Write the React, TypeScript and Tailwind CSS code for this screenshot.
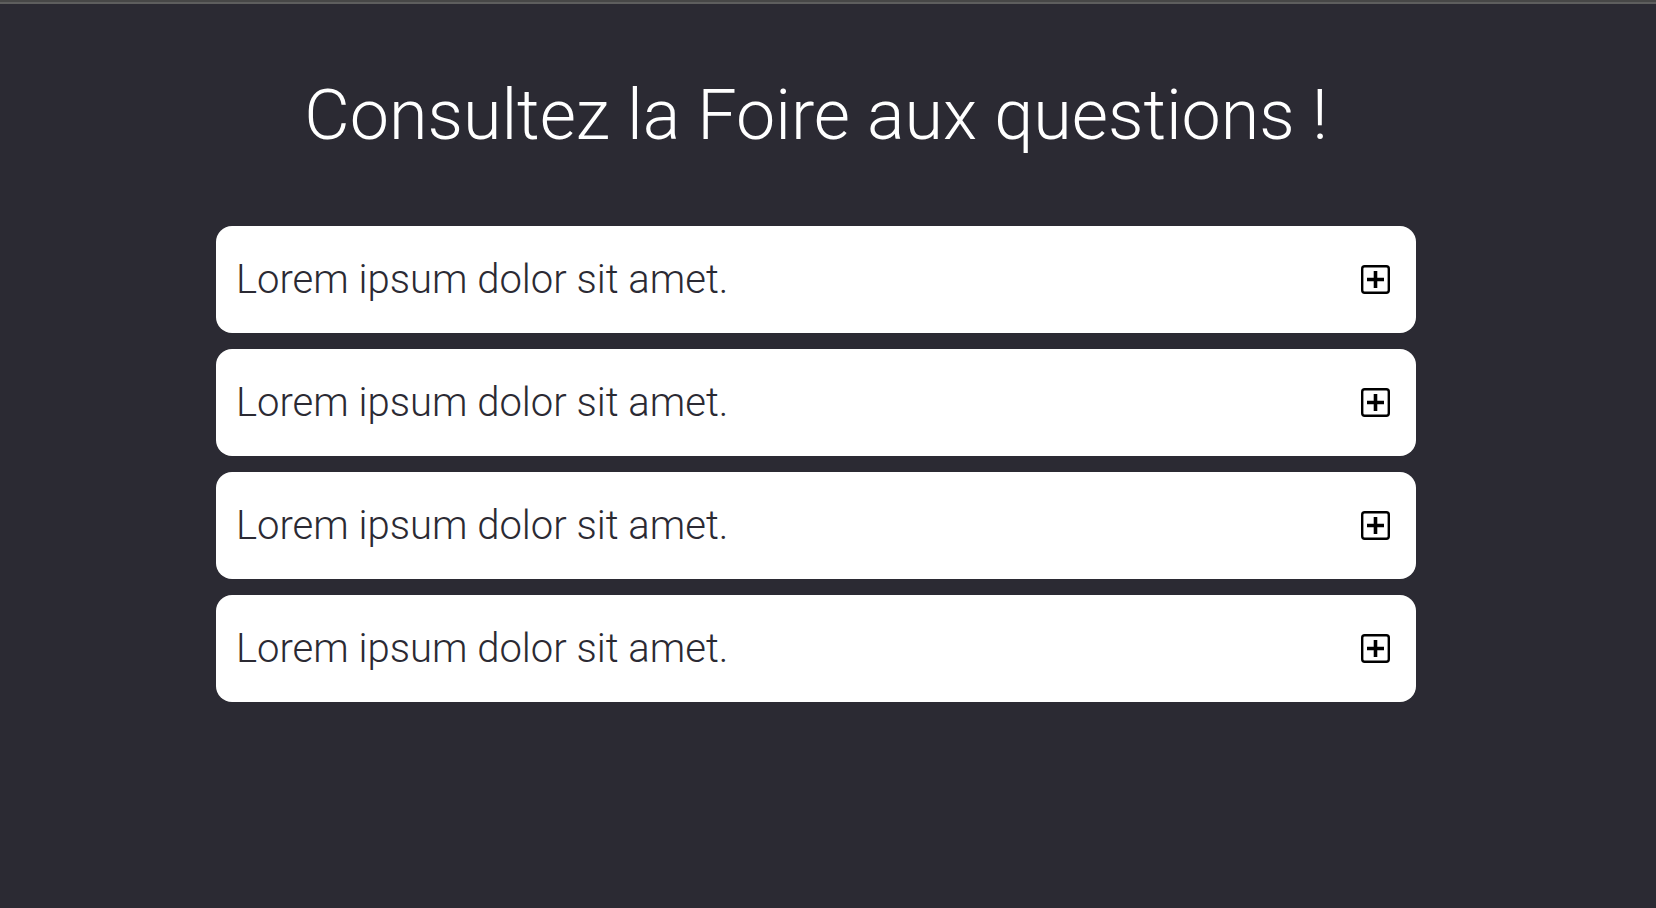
import { useState } from 'react';

const questions = [
  'Lorem ipsum dolor sit amet.',
  'Lorem ipsum dolor sit amet.',
  'Lorem ipsum dolor sit amet.',
  'Lorem ipsum dolor sit amet.',
];

function PlusSquare() {
  return (
    <svg className="w-[29px] h-[29px]" viewBox="0 0 29 29" fill="none" stroke="#000">
      <rect x="1.2" y="1.2" width="26.6" height="26.6" rx="2.5" strokeWidth={2.4} />
      <path d="M14.5 6v17M6 14.5h17" strokeWidth={3.6} />
    </svg>
  );
}

export default function App() {
  const [open, setOpen] = useState<number | null>(null);

  return (
    <div className="min-h-screen bg-[#2b2a33] font-['Roboto',sans-serif]">
      {/* bande en haut */}
      <div className="h-[2px] bg-[#474747]" />
      <div className="h-[2px] bg-[#5e5e5e]" />

      <main className="w-[1632px] pb-20">
        <h1 className="pt-[71px] text-center text-[70px] leading-[80px] font-light text-white">
          Consultez la Foire aux questions !
        </h1>

        <div className="mt-[71px] w-[1200px] mx-auto flex flex-col gap-[16px]">
          {questions.map((q, i) => (
            <button
              key={i}
              onClick={() => setOpen(open === i ? null : i)}
              className="h-[107px] w-full bg-white rounded-[16px] pl-[20px] pr-[26px] flex items-center justify-between text-left"
            >
              <span className="text-[40px] font-light text-[#2b2a33]">{q}</span>
              <PlusSquare />
            </button>
          ))}
        </div>
      </main>
    </div>
  );
}
